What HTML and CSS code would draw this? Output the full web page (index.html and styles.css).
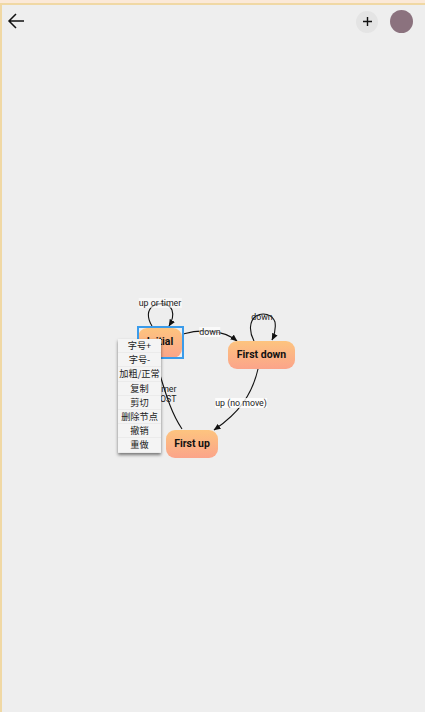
FILE: index.html
```html
<!DOCTYPE html>
<html lang="zh">
<head>
<meta charset="utf-8">
<title>State diagram</title>
<link rel="stylesheet" href="styles.css">
</head>
<body>
<div class="app">
  <header class="toolbar">
    <button class="icon-btn back" aria-label="Back">
      <svg width="18" height="18" viewBox="0 0 18 18"><path d="M17 9H2M9 2L2 9l7 7" fill="none" stroke="#111" stroke-width="1.5"/></svg>
    </button>
    <div class="actions">
      <span class="add">
        <svg width="9" height="9" viewBox="0 0 9 9"><path d="M4.5 0v9M0 4.5h9" fill="none" stroke="#111" stroke-width="1.4"/></svg>
      </span>
      <span class="avatar"></span>
    </div>
  </header>
  <main class="stage">
    <svg class="edges" width="425" height="712" viewBox="0 0 425 712">
      <defs>
        <marker id="arrow" markerWidth="7" markerHeight="7" refX="6.5" refY="3.5" orient="auto" markerUnits="userSpaceOnUse">
          <path d="M0 0.5L7 3.5L0 6.5Z" fill="#111"/>
        </marker>
      </defs>
      <path class="edge" marker-end="url(#arrow)" d="M152 326C147 318 147 310 153 306C160 302 169 303 172 310C174 316 172 321 169 326"/>
      <path class="edge" marker-end="url(#arrow)" d="M254 341C249 332 249 321 256 316C263 312 272 314 275 322C276 329 275 334 272 340"/>
      <path class="edge" marker-end="url(#arrow)" d="M183 334C200 329 222 329 237 341"/>
      <path class="edge" marker-end="url(#arrow)" d="M258 369C252 395 239 413 214 430"/>
      <path class="edge" d="M182 429C172 414 167 398 160 375"/>
    </svg>
    <span class="label l-timer">up or timer</span>
    <span class="label l-down1">down</span>
    <span class="label l-down2">down</span>
    <span class="label l-move">up (no move)</span>
    <span class="label l-boost">timer<br>BOOST</span>
    <div class="node n-initial">Initial</div>
    <div class="selection"></div>
    <div class="node n-down">First down</div>
    <div class="node n-up">First up</div>
    <ul class="menu">
      <li>字号+</li>
      <li>字号-</li>
      <li>加粗/正常</li>
      <li>复制</li>
      <li>剪切</li>
      <li>删除节点</li>
      <li>撤销</li>
      <li>重做</li>
    </ul>
  </main>
</div>
</body>
</html>
```
FILE: styles.css
```css
* { box-sizing: border-box; }
html, body { margin: 0; height: 100%; }
body { background: #fbe9d8; font-family: Roboto, "Noto Sans CJK SC", sans-serif; overflow: hidden; }
.app {
  height: 709px;
  margin-top: 3px;
  background: #eeeeee;
  border-top: 2px solid #f0d8a4;
  border-left: 2px solid #f0d8a4;
  display: flex;
  flex-direction: column;
  position: relative;
}
.toolbar {
  display: flex;
  justify-content: space-between;
  align-items: center;
  height: 32px;
  padding: 0 12px 0 5px;
}
.icon-btn { background: none; border: 0; padding: 0; display: flex; }
.actions { display: flex; align-items: center; gap: 11px; padding-top: 1px; }
.add {
  width: 22px; height: 22px; border-radius: 50%;
  background: #e4e4e4;
  display: flex; align-items: center; justify-content: center;
  margin-left: -1px; margin-right: 1px;
}
.avatar { width: 23px; height: 23px; border-radius: 50%; background: #8b727e; }
.stage { flex: 1; }
.edges { position: absolute; left: -2px; top: -5px; }
.edge { fill: none; stroke: #111; stroke-width: 1.1; }
.label {
  position: absolute;
  font-size: 8.8px;
  line-height: 10px;
  color: #222;
  white-space: nowrap;
  transform: translate(-50%, -50%);
  background: rgba(255, 255, 255, 0.55);
}
.l-timer { left: 158px; top: 298px; }
.l-down1 { left: 208px; top: 326.5px; background: rgba(255,255,255,.7); }
.l-down2 { left: 260px; top: 311.5px; background: none; }
.l-move { left: 239px; top: 398px; background: rgba(255,255,255,.8); }
.l-boost { left: 157.5px; top: 389px; width: 34px; text-align: right; background: none; }
.node {
  position: absolute;
  display: flex; align-items: center; justify-content: center;
  padding-bottom: 2px;
  font-size: 10.5px; font-weight: 700; color: #111;
  background: linear-gradient(180deg, #fdc47f, #fba48a);
  border-radius: 9px;
}
.n-initial { left: 136px; top: 322.5px; width: 44px; height: 30px; }
.n-down { left: 226px; top: 336px; width: 67px; height: 28px; }
.n-up { left: 164px; top: 425px; width: 52px; height: 28px; }
.selection {
  position: absolute;
  left: 135px; top: 321px;
  width: 47px; height: 32.5px;
  border: 2px solid #3a9bea;
}
.menu {
  position: absolute;
  left: 116px; top: 334px;
  width: 43px;
  margin: 0; padding: 0;
  list-style: none;
  background: #f4f4f4;
  box-shadow: 0 2px 3px rgba(0, 0, 0, 0.5);
  font-family: "Noto Sans CJK SC", sans-serif;
  font-size: 9.2px;
  color: #222;
  text-align: center;
}
.menu li {
  height: 14.2px;
  line-height: 12.5px;
  white-space: nowrap;
  border-bottom: 1px solid #ebebeb;
}
```
